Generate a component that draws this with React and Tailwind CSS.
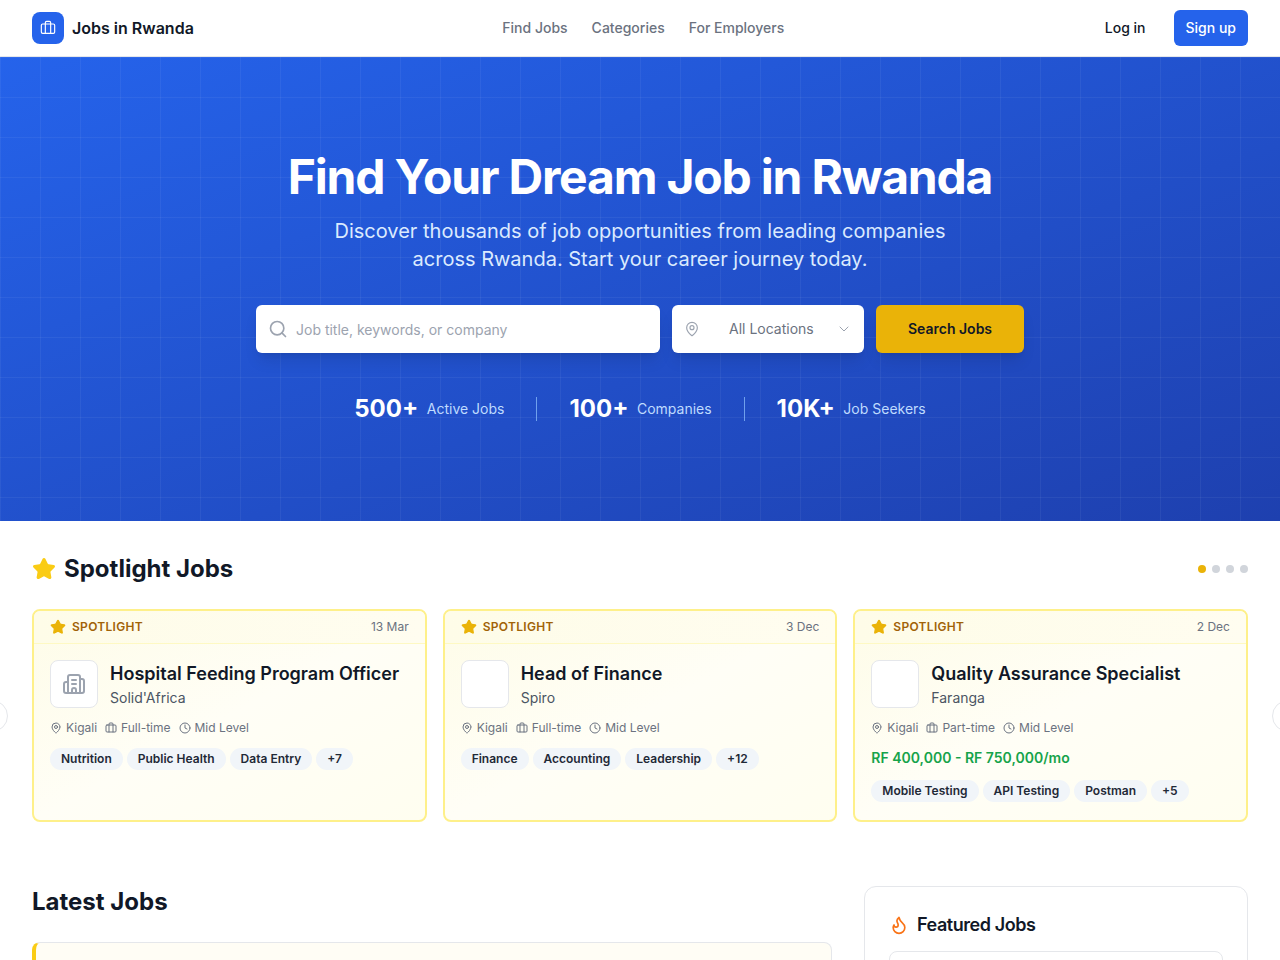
import { Briefcase, Building2, ChevronDown, Clock, Flame, MapPin, Search, Star } from 'lucide-react';

const spotlight = [
  { title: 'Hospital Feeding Program Officer', company: "Solid'Africa", date: '13 Mar', type: 'Full-time', logo: true, tags: ['Nutrition', 'Public Health', 'Data Entry', '+7'] },
  { title: 'Head of Finance', company: 'Spiro', date: '3 Dec', type: 'Full-time', tags: ['Finance', 'Accounting', 'Leadership', '+12'] },
  { title: 'Quality Assurance Specialist', company: 'Faranga', date: '2 Dec', type: 'Part-time', salary: 'RF 400,000 - RF 750,000/mo', tags: ['Mobile Testing', 'API Testing', 'Postman', '+5'] },
];

const stats = [
  { value: '500+', label: 'Active Jobs' },
  { value: '100+', label: 'Companies' },
  { value: '10K+', label: 'Job Seekers' },
];

function SpotlightCard({ job }) {
  return (
    <div className="h-[213px] rounded-lg border-2 border-[#fef08a] bg-gradient-to-br from-[#fefce8] via-[#fffef6] to-[#fffef0] overflow-hidden">
      <div className="h-[33px] flex items-center justify-between px-4 border-b border-[#fef9c3] bg-gradient-to-r from-[#fefce8] to-[#fffdf0]">
        <div className="flex items-center gap-1.5">
          <Star className="w-4 h-4 text-[#eab308] fill-[#eab308]" />
          <span className="text-xs font-semibold tracking-wide text-[#a16207]">SPOTLIGHT</span>
        </div>
        <span className="text-xs text-[#6b7280]">{job.date}</span>
      </div>
      <div className="p-4">
        <div className="flex gap-3">
          <div className="w-12 h-12 shrink-0 flex items-center justify-center rounded-lg border border-[#e5e7eb] bg-white">
            {job.logo && <Building2 className="w-6 h-6 text-[#9ca3af]" />}
          </div>
          <div className="min-w-0">
            <h3 className="text-lg leading-7 font-semibold text-[#111827]">{job.title}</h3>
            <p className="text-sm leading-5 text-[#4b5563]">{job.company}</p>
          </div>
        </div>
        <div className="mt-3 flex items-center gap-2 text-xs leading-4 text-[#6b7280]">
          <span className="flex items-center gap-1"><MapPin className="w-3 h-3" />Kigali</span>
          <span className="flex items-center gap-1"><Briefcase className="w-3 h-3" />{job.type}</span>
          <span className="flex items-center gap-1"><Clock className="w-3 h-3" />Mid Level</span>
        </div>
        {job.salary && <p className="mt-3 text-sm leading-5 font-semibold text-[#16a34a]">{job.salary}</p>}
        <div className="mt-3 flex items-center gap-1">
          {job.tags.map((tag) => (
            <span key={tag} className="px-[11px] py-[3px] rounded-full bg-[#f1f5f9] text-xs leading-4 font-semibold text-[#1f2937]">{tag}</span>
          ))}
        </div>
      </div>
    </div>
  );
}

export default function App() {
  return (
    <div className="h-[960px] overflow-hidden bg-white font-['Inter',sans-serif] text-[#111827]">
      {/* Header */}
      <header className="h-[57px] flex items-center justify-between px-8 border-b border-[#e5e7eb] bg-white">
        <div className="flex items-center gap-2">
          <div className="w-8 h-8 flex items-center justify-center rounded-lg bg-[#2563eb]">
            <Briefcase className="w-4 h-4 text-white" strokeWidth={1.75} />
          </div>
          <span className="text-base font-semibold">Jobs in Rwanda</span>
        </div>
        <nav className="flex items-center gap-6 text-sm font-medium text-[#6b7280]">
          <a>Find Jobs</a>
          <a>Categories</a>
          <a>For Employers</a>
        </nav>
        <div className="flex items-center gap-2">
          <button className="h-9 px-3 text-sm font-medium text-[#111827]">Log in</button>
          <button className="h-9 ml-2 px-3 rounded-md bg-[#2563eb] text-sm font-medium text-white">Sign up</button>
        </div>
      </header>

      {/* Hero */}
      <section className="relative h-[464px] bg-gradient-to-br from-[#2563eb] to-[#1e40af]">
        <div className="absolute inset-0 bg-[linear-gradient(rgba(255,255,255,0.05)_1px,transparent_1px),linear-gradient(90deg,rgba(255,255,255,0.05)_1px,transparent_1px)] bg-[size:40px_40px]"></div>
        <div className="relative flex flex-col items-center pt-[88px]">
          <h1 className="text-5xl leading-[64px] font-bold tracking-tight text-white">Find Your Dream Job in Rwanda</h1>
          <p className="mt-2 max-w-2xl text-center text-xl leading-7 text-[#dbeafe]">
            Discover thousands of job opportunities from leading companies across Rwanda. Start your career journey today.
          </p>
          <div className="mt-8 w-[768px] flex gap-3">
            <div className="flex-1 h-12 flex items-center gap-2 px-3 rounded-md bg-white shadow-lg">
              <Search className="w-5 h-5 text-[#9ca3af]" />
              <span className="mt-0.5 text-sm text-[#9ca3af]">Job title, keywords, or company</span>
            </div>
            <div className="w-48 h-12 flex items-center px-3 rounded-md bg-white shadow-lg text-sm text-[#6b7280]">
              <MapPin className="w-4 h-4 text-[#9ca3af]" strokeWidth={1.75} />
              <span className="ml-[29px] flex-1">All Locations</span>
              <ChevronDown className="w-4 h-4 text-[#9ca3af]" strokeWidth={1.5} />
            </div>
            <button className="w-[148px] h-12 rounded-md bg-[#eab308] text-sm font-semibold text-[#111827] shadow-lg">Search Jobs</button>
          </div>
          <div className="mt-11 h-6 flex items-center text-white">
            {stats.map((stat, i) => (
              <div key={stat.label} className="flex items-center">
                {i > 0 && <span className="w-px h-6 mx-8 bg-[#93c5fd]/70"></span>}
                <div className="flex items-center gap-[8.5px]">
                  <span className="text-2xl leading-6 font-bold">{stat.value}</span>
                  <span className="text-sm leading-6 text-[#bfdbfe]">{stat.label}</span>
                </div>
              </div>
            ))}
          </div>
        </div>
      </section>

      {/* Spotlight */}
      <section className="relative px-8 pt-8">
        <div className="h-8 flex items-center justify-between">
          <div className="flex items-center gap-2">
            <Star className="w-6 h-6 text-[#facc15] fill-[#facc15]" />
            <h2 className="text-2xl font-bold">Spotlight Jobs</h2>
          </div>
          <div className="flex items-center gap-1.5">
            <span className="w-2 h-2 rounded-full bg-[#eab308]"></span>
            <span className="w-2 h-2 rounded-full bg-[#d1d5db]"></span>
            <span className="w-2 h-2 rounded-full bg-[#d1d5db]"></span>
            <span className="w-2 h-2 rounded-full bg-[#d1d5db]"></span>
          </div>
        </div>
        <div className="mt-6 grid grid-cols-3 gap-4">
          {spotlight.map((job) => <SpotlightCard key={job.title} job={job} />)}
        </div>
        <span className="absolute left-[-24px] top-[179px] w-8 h-8 rounded-full border border-[#e5e7eb] bg-white"></span>
        <span className="absolute right-[-24px] top-[179px] w-8 h-8 rounded-full border border-[#e5e7eb] bg-white"></span>
      </section>

      {/* Latest + featured */}
      <section className="mt-16 px-8 grid grid-cols-3 gap-8">
        <div className="col-span-2">
          <h2 className="text-2xl leading-8 font-bold">Latest Jobs</h2>
          <div className="mt-6 h-40 rounded-lg border border-[#e5e7eb] border-l-4 border-l-[#facc15] bg-[#fffdf5]"></div>
        </div>
        <div className="rounded-xl border border-[#e5e7eb] bg-white px-6 pt-6 h-40">
          <div className="flex items-center gap-2">
            <Flame className="w-5 h-5 text-[#f97316]" />
            <h3 className="text-lg font-semibold tracking-tight">Featured Jobs</h3>
          </div>
          <div className="mt-3 h-24 rounded-lg border border-[#e5e7eb]"></div>
        </div>
      </section>
    </div>
  );
}
